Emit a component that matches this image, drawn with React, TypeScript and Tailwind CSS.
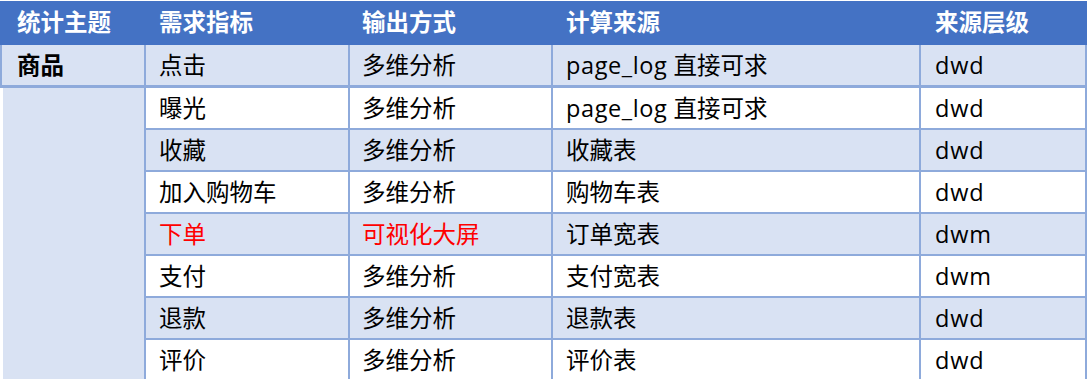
import React from 'react'

type Row = {
    metric: string
    output: string
    source: string
    level: string
    red?: boolean
}

const rows: Row[] = [
    { metric: '曝光', output: '多维分析', source: '收藏表', level: 'dwd' },
    { metric: '收藏', output: '多维分析', source: '收藏表', level: 'dwd' },
    { metric: '加入购物车', output: '多维分析', source: '购物车表', level: 'dwd' },
    { metric: '下单', output: '可视化大屏', source: '订单宽表', level: 'dwm', red: true },
    { metric: '支付', output: '多维分析', source: '支付宽表', level: 'dwm' },
    { metric: '退款', output: '多维分析', source: '退款表', level: 'dwd' },
    { metric: '评价', output: '多维分析', source: '评价表', level: 'dwd' },
]

const font = { fontFamily: '"Open Sans", "Noto Sans CJK SC", sans-serif' }

const cell = 'flex items-center h-[42px] pt-[2px] border-r-2 border-b-2 border-[#8eaadb] text-[23.5px]'

// page_log source cell, latin a bit wider like the original
const PageLog = () => (
    <>
        <span className="tracking-[0.6px]">page_log</span>&nbsp;直接可求
    </>
)

const App = () => {
    return (
        <div className="w-[1087px] h-[379px] overflow-hidden bg-white pt-px" style={font}>
            {/* header */}
            <div className="grid grid-cols-[146px_204px_203px_368px_166px] h-[44px] bg-[#4472c4] text-white text-[23.5px] font-bold">
                <div className="flex items-center pl-[17px]">统计主题</div>
                <div className="flex items-center pl-[13px]">需求指标</div>
                <div className="flex items-center pl-[12px]">输出方式</div>
                <div className="flex items-center pl-[13px]">计算来源</div>
                <div className="flex items-center pl-[14px]">来源层级</div>
            </div>

            <div className="grid grid-cols-[146px_204px_203px_368px_166px] text-black">
                <div className={`${cell} h-[43px] border-b-[3px] border-l-2 pl-[15px] font-bold bg-[#d9e2f3]`}>商品</div>
                <div className={`${cell} h-[43px] border-b-[3px] pl-[13px] bg-[#d9e2f3]`}>点击</div>
                <div className={`${cell} h-[43px] border-b-[3px] pl-[12px] bg-[#d9e2f3]`}>多维分析</div>
                <div className={`${cell} h-[43px] border-b-[3px] pl-[13px] bg-[#d9e2f3]`}><PageLog /></div>
                <div className={`${cell} h-[43px] border-b-[3px] pl-[14px] bg-[#d9e2f3] tracking-[0.8px]`}>dwd</div>

                <div className="row-span-7 ml-[3px] bg-[#d9e2f3] border-r-2 border-[#8eaadb]" />

                {rows.map((r, i) => {
                    const bg = i % 2 === 0 ? 'bg-white' : 'bg-[#d9e2f3]'
                    const red = r.red ? 'text-[#ff0000]' : 'text-black'
                    return (
                        <React.Fragment key={r.metric}>
                            <div className={`${cell} pl-[13px] ${bg} ${red}`}>{r.metric}</div>
                            <div className={`${cell} pl-[12px] ${bg} ${red}`}>{r.output}</div>
                            <div className={`${cell} pl-[13px] ${bg}`}>{i === 0 ? <PageLog /> : r.source}</div>
                            <div className={`${cell} pl-[14px] ${bg} tracking-[0.8px]`}>{r.level}</div>
                        </React.Fragment>
                    )
                })}
            </div>
        </div>
    )
}

export default App
